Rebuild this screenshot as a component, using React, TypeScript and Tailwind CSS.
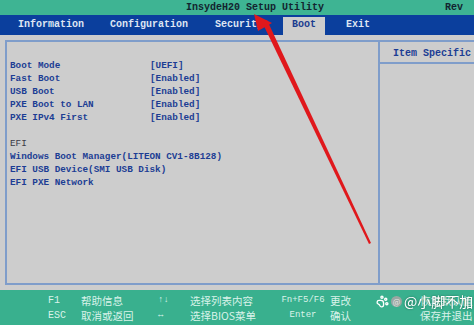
import { PawPrint } from "lucide-react";

const mono = "font-['Liberation_Mono','DejaVu_Sans_Mono',monospace]";
const cjk = "font-['Noto_Sans_CJK_SC','Noto_Sans',sans-serif]";

const settings: [string, string][] = [
	["Boot Mode", "[UEFI]"],
	["Fast Boot", "[Enabled]"],
	["USB Boot", "[Enabled]"],
	["PXE Boot to LAN", "[Enabled]"],
	["PXE IPv4 First", "[Enabled]"],
];

const efi = [
	"Windows Boot Manager(LITEON CV1-8B128)",
	"EFI USB Device(SMI USB Disk)",
	"EFI PXE Network",
];

const footer = [
	["F1", "帮助信息", "↑↓", "选择列表内容", "Fn+F5/F6", "更改", "恢复默认值"],
	["ESC", "取消或返回", "↔", "选择BIOS菜单", "Enter", "确认", "保存并退出"],
];

export default function App() {
	return (
		<div className={`relative w-[474px] h-[325px] overflow-hidden bg-[#cdcdcd] ${mono}`}>
			{/* title bar */}
			<div className="h-[15px] bg-[#3eb493] flex items-center text-[10px] font-bold text-[#13242f]">
				<span className="ml-[186px]">InsydeH20 Setup Utility</span>
				<span className="ml-auto mr-[-6px] w-[35px]">Rev</span>
			</div>

			{/* menu */}
			<div className="h-[20px] bg-[#0b3f9d] flex items-end text-[10px] font-bold text-[#dfe6f3]">
				<span className="ml-[18px] h-[18px] leading-[16px]">Information</span>
				<span className="ml-[26px] h-[18px] leading-[16px]">Configuration</span>
				<span className="ml-[27px] h-[18px] leading-[16px]">Security</span>
				<span className="ml-[20px] h-[18px] leading-[16px] bg-[#cdcdcd] text-[#1b3c8f] pl-[9px] w-[42px]">Boot</span>
				<span className="ml-[21px] h-[18px] leading-[16px]">Exit</span>
			</div>

			{/* main */}
			<div className="h-[255px] pt-[5px] pb-[5px] pl-[5px]">
				<div className="h-full flex border-t-2 border-b-2 border-l-2 border-[#7f9dca]">
					<div className="w-[371px] shrink-0 pt-[17px] pl-[3px] text-[9.3px] font-bold leading-[13px] text-[#1c3d94]">
						{settings.map(([k, v]) => (
							<div key={k} className="flex h-[13px]">
								<span className="w-[140px]">{k}</span>
								<span>{v}</span>
							</div>
						))}
						<div className="h-[13px]" />
						<div className="h-[13px] font-normal text-[#3b3b46]">EFI</div>
						{efi.map((e) => (
							<div key={e} className="h-[13px] whitespace-nowrap">{e}</div>
						))}
					</div>
					<div className="flex-1 min-w-0 overflow-hidden border-l-2 border-[#7f9dca]">
						<div className="h-[22px] border-b-2 border-[#7f9dca] pl-[13px] text-[10px] font-bold leading-[24px] text-[#1c3d94] whitespace-nowrap">
							Item Specific
						</div>
					</div>
				</div>
			</div>

			{/* footer */}
			<div className="h-[35px] bg-[#39b08e] pt-[3px] text-[10px] text-[#d9f3ea]">
				{footer.map((row, i) => (
					<div key={i} className="flex h-[15px] items-center whitespace-nowrap">
						<span className="ml-[48px] w-[33px]">{row[0]}</span>
						<span className={`w-[77px] ${cjk} text-[10.5px]`}>{row[1]}</span>
						<span className="w-[32px] text-[9px]">{row[2]}</span>
						<span className={`w-[86px] ${cjk} text-[10.5px]`}>{row[3]}</span>
						<span className="w-[54px] text-center text-[9px]">{row[4]}</span>
						<span className={`w-[90px] ${cjk} text-[10.5px]`}>{row[5]}</span>
						<span className={`${cjk} text-[10.5px]`}>{row[6]}</span>
					</div>
				))}
			</div>

			{/* watermark */}
			<div className={`absolute left-[376px] top-[292px] flex items-center gap-[2px] whitespace-nowrap text-white ${cjk}`}>
				<PawPrint size={13} strokeWidth={2.5} className="shrink-0 text-white" />
				<span className="shrink-0 w-[11px] h-[11px] rounded-full bg-[#9aa7a2] text-[8px] leading-[11px] text-center text-[#e8e8e8]">@</span>
				<span className="text-[14px] leading-[18px] drop-shadow-[0_0_1px_rgba(0,0,0,0.4)]">@小脚不加</span>
			</div>

			{/* red arrow annotation */}
			<svg className="absolute left-0 top-0 pointer-events-none" width="474" height="325" viewBox="0 0 474 325">
				<polygon points="262,22 267,20 371,243 369,244" fill="#e0181c" />
				<polygon points="254,14 258,31 272,23" fill="#e0181c" />
			</svg>
		</div>
	);
}
